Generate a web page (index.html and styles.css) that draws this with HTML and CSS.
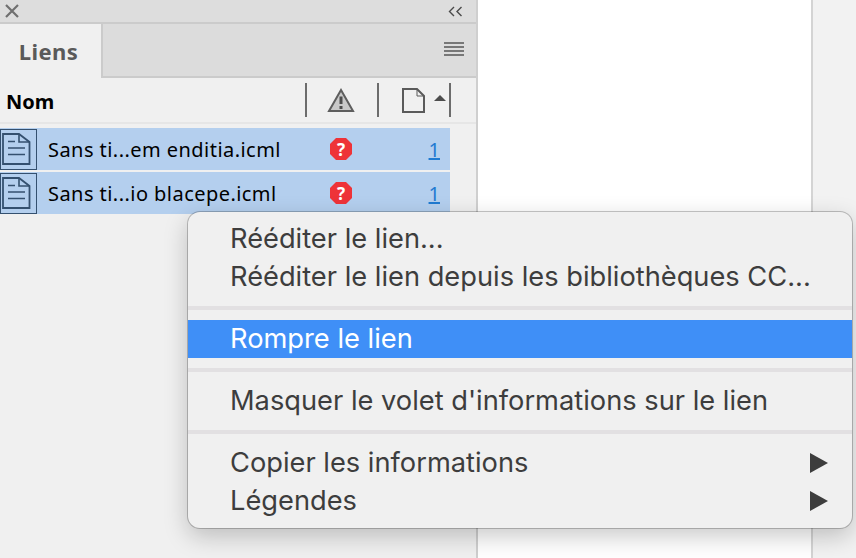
FILE: index.html
```html
<!DOCTYPE html>
<html lang="fr">
<head>
    <meta charset="UTF-8">
    <meta name="viewport" content="width=device-width, initial-scale=1.0">
    <title>Liens</title>
    <link rel="stylesheet" href="styles.css">
</head>
<body>

    <div class="panel">
        <div class="title-bar">
            <svg class="icon-close" width="14" height="14" viewBox="0 0 14 14"><path d="M1 1L13 13M13 1L1 13" stroke="#6f6f6f" stroke-width="2.2" fill="none"/></svg>
            <svg class="icon-collapse" width="15" height="11" viewBox="0 0 15 11"><path d="M6 1L1.5 5.5L6 10M13.5 1L9 5.5L13.5 10" stroke="#4a4a4a" stroke-width="1.4" fill="none"/></svg>
        </div>

        <div class="tab-bar">
            <div class="tab">Liens</div>
            <div class="tab-rest">
                <div class="panel-menu"><span></span><span></span><span></span><span></span></div>
            </div>
        </div>

        <div class="col-header">
            <div class="col-name">Nom</div>
            <div class="col-divider"></div>
            <svg class="col-warning" width="28" height="25" viewBox="0 0 28 25">
                <path d="M14 2L26 23H2Z" fill="#c9c9c9" stroke="#5e5e5e" stroke-width="2"/>
                <path d="M14 8.5V16" stroke="#4d4d4d" stroke-width="3"/>
                <path d="M14 18V21" stroke="#4d4d4d" stroke-width="3"/>
            </svg>
            <div class="col-divider"></div>
            <svg class="col-page" width="23" height="25" viewBox="0 0 23 25">
                <path d="M1 1H15L22 8V24H1Z" fill="none" stroke="#5a5a5a" stroke-width="2"/>
                <path d="M15 1V8H22" fill="none" stroke="#5a5a5a" stroke-width="1"/>
            </svg>
            <div class="sort-arrow"></div>
            <div class="col-divider"></div>
        </div>

        <div class="link-row">
            <div class="row-icon">
                <svg width="30" height="34" viewBox="0 0 30 34">
                    <path d="M2 2H18L28.500 10V32H2Z" fill="none" stroke="#34506f" stroke-width="1.8"/>
                    <path d="M18 2V10H28.500M7 9.500H14M7 16H24M7 22.500H24" fill="none" stroke="#34506f" stroke-width="1.6"/>
                </svg>
            </div>
            <div class="row-name">Sans ti...em enditia.icml</div>
            <svg class="row-status" width="24" height="24" viewBox="0 0 24 24">
                <path d="M7 1H17L23 7V17L17 23H7L1 17V7Z" fill="#ee3338"/>
                <text x="12" y="18.500" class="status-mark">?</text>
            </svg>
            <div class="row-page">1</div>
        </div>

        <div class="link-row">
            <div class="row-icon">
                <svg width="30" height="34" viewBox="0 0 30 34">
                    <path d="M2 2H18L28.500 10V32H2Z" fill="none" stroke="#34506f" stroke-width="1.8"/>
                    <path d="M18 2V10H28.500M7 9.500H14M7 16H24M7 22.500H24" fill="none" stroke="#34506f" stroke-width="1.6"/>
                </svg>
            </div>
            <div class="row-name">Sans ti...io blacepe.icml</div>
            <svg class="row-status" width="24" height="24" viewBox="0 0 24 24">
                <path d="M7 1H17L23 7V17L17 23H7L1 17V7Z" fill="#ee3338"/>
                <text x="12" y="18.500" class="status-mark">?</text>
            </svg>
            <div class="row-page">1</div>
        </div>
    </div>

    <div class="page-area"></div>
    <div class="gutter"></div>

    <div class="context-menu">
        <div class="menu-item">Rééditer le lien...</div>
        <div class="menu-item">Rééditer le lien depuis les bibliothèques CC...</div>
        <div class="menu-sep"></div>
        <div class="menu-item active">Rompre le lien</div>
        <div class="menu-sep"></div>
        <div class="menu-item">Masquer le volet d'informations sur le lien</div>
        <div class="menu-sep"></div>
        <div class="menu-item has-sub">Copier les informations</div>
        <div class="menu-item has-sub">Légendes</div>
    </div>

</body>
</html>
```
FILE: styles.css
```css
/* General Styles */
html, body {
    height: 100%;
}

body {
    margin: 0;
    display: flex;
    overflow: hidden;
    background: #ffffff;
    font-family: "Noto Sans", sans-serif;
}

/* Links Panel */
.panel {
    width: 476px;
    flex-shrink: 0;
    background: #f0f0f0;
    border-right: 2px solid #cfcfcf;
    box-shadow: 4px 0 10px rgba(0, 0, 0, 0.08);
}

.title-bar {
    height: 22px;
    display: flex;
    align-items: center;
    justify-content: space-between;
    padding: 0 13px 0 5px;
    background: #dddddd;
    border-bottom: 2px solid #cbcbcb;
}

.tab-bar {
    height: 54px;
    display: flex;
}

.tab {
    width: 101px;
    padding: 12px 4px 0 0;
    text-align: center;
    font-size: 22px;
    font-weight: 700;
    letter-spacing: 0.4px;
    line-height: 30px;
    color: #5a5a5a;
    box-sizing: border-box;
}

.tab-rest {
    flex: 1;
    display: flex;
    align-items: center;
    justify-content: flex-end;
    padding-right: 12px;
    background: #dcdcdc;
    border-left: 2px solid #cbcbcb;
    border-bottom: 2px solid #cbcbcb;
}

.panel-menu {
    display: flex;
    flex-direction: column;
    gap: 2px;
    margin-top: -2px;
}

.panel-menu span {
    display: block;
    width: 20px;
    height: 2px;
    background: #777777;
}

/* Column Header */
.col-header {
    height: 46px;
    display: flex;
    align-items: center;
    border-bottom: 2px solid #e6e6e6;
    box-sizing: border-box;
}

.col-name {
    width: 305px;
    padding: 2px 0 0 6px;
    box-sizing: border-box;
    font-size: 20px;
    font-weight: 700;
    color: #000000;
}

.col-divider {
    width: 2px;
    height: 34px;
    background: #6c6c6c;
}

.col-warning {
    margin: 0 22px 0 20px;
}

.col-page {
    margin-left: 23px;
}

.sort-arrow {
    width: 0;
    height: 0;
    margin: 0 3px 5px 9px;
    border-left: 6px solid transparent;
    border-right: 6px solid transparent;
    border-bottom: 6px solid #4d4d4d;
}

/* Link Rows */
.link-row {
    width: 450px;
    height: 42px;
    display: flex;
    align-items: center;
    margin-bottom: 2px;
    background: #b4cfee;
}

.col-header + .link-row {
    margin-top: 4px;
}

.row-icon {
    width: 37px;
    height: 41px;
    flex-shrink: 0;
    display: flex;
    align-items: center;
    border: 1px solid #34506f;
    box-sizing: border-box;
}

.row-name {
    width: 292px;
    padding: 1px 0 0 11px;
    box-sizing: border-box;
    font-size: 20px;
    letter-spacing: 0.45px;
    color: #000000;
    white-space: nowrap;
}

.row-status {
    flex-shrink: 0;
}

.status-mark {
    font-family: "Noto Sans", sans-serif;
    font-size: 17px;
    font-weight: 700;
    text-anchor: middle;
    fill: #ffffff;
}

.row-page {
    margin-left: auto;
    margin-right: 10px;
    font-size: 20px;
    color: #1f7ad1;
    text-decoration: underline;
}

/* Right side of the window */
.page-area {
    flex: 1;
    background: #ffffff;
}

.gutter {
    width: 43px;
    flex-shrink: 0;
    background: #f2f2f2;
    border-left: 2px solid #d4d4d4;
}

/* Context Menu */
.context-menu {
    position: absolute;
    left: 188px;
    top: 212px;
    width: 664px;
    height: 316px;
    padding: 8px 0;
    box-sizing: border-box;
    background: #f0f0f0;
    border-radius: 12px;
    box-shadow: 0 0 0 1px rgba(0, 0, 0, 0.22), 0 8px 24px rgba(0, 0, 0, 0.22);
    font-family: Inter, sans-serif;
    font-size: 27.25px;
    color: #3d3d3d;
}

.menu-item {
    position: relative;
    height: 38px;
    line-height: 38px;
    padding-left: 42px;
    white-space: nowrap;
}

.menu-item.active {
    background: #3f8ff7;
    color: #ffffff;
}

.menu-item.has-sub::after {
    content: "";
    position: absolute;
    right: 24px;
    top: 9px;
    border-left: 18px solid #3d3d3d;
    border-top: 10px solid transparent;
    border-bottom: 10px solid transparent;
}

.menu-sep {
    height: 4px;
    margin: 10px 0;
    background: #e2e0e2;
}
```
